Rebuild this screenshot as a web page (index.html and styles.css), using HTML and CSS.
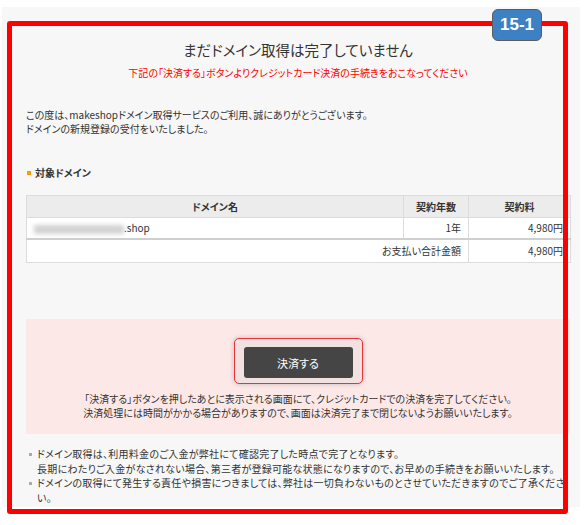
FILE: index.html
```html
<!DOCTYPE html>
<html lang="ja">
<head>
<meta charset="utf-8">
<title>ドメイン取得</title>
<link rel="stylesheet" href="styles.css">
</head>
<body>
<div class="panel">
  <h1 class="title">まだドメイン取得は完了していません</h1>
  <p class="alert">下記の「決済する」ボタンよりクレジットカード決済の手続きをおこなってください</p>
  <p class="intro">この度は、makeshopドメイン取得サービスのご利用、誠にありがとうございます。<br>ドメインの新規登録の受付をいたしました。</p>
  <h2 class="sec">対象ドメイン</h2>
  <table class="domains">
    <thead>
      <tr><th class="c-name">ドメイン名</th><th class="c-year">契約年数</th><th class="c-fee">契約料</th></tr>
    </thead>
    <tbody>
      <tr class="item"><td class="name"><span class="blur"></span>.shop</td><td class="num">1年</td><td class="num">4,980円</td></tr>
      <tr class="total"><td class="num" colspan="2">お支払い合計金額</td><td class="num">4,980円</td></tr>
    </tbody>
  </table>
  <div class="pay">
    <div class="btn-wrap"><button class="btn" type="button">決済する</button></div>
    <p class="pay-note">「決済する」ボタンを押したあとに表示される画面にて、クレジットカードでの決済を完了してください。<br>決済処理には時間がかかる場合がありますので、画面は決済完了まで閉じないようお願いいたします。</p>
  </div>
  <ul class="notes">
    <li>ドメイン取得は、利用料金のご入金が弊社にて確認完了した時点で完了となります。<br>長期にわたりご入金がなされない場合、第三者が登録可能な状態になりますので、お早めの手続きをお願いいたします。</li>
    <li>ドメインの取得にて発生する責任や損害につきましては、弊社は一切負わないものとさせていただきますのでご了承くださ<br>い。</li>
  </ul>
</div>
<div class="frame"></div>
<div class="badge">15-1</div>
</body>
</html>
```
FILE: styles.css
```css
* { box-sizing: border-box; }
html, body { margin: 0; padding: 0; background: #fff; }
body {
  position: relative;
  width: 584px;
  height: 525px;
  overflow: hidden;
  font-family: "Noto Sans CJK JP", "Noto Sans", sans-serif;
  font-feature-settings: "palt";
  color: #333;
}
.panel {
  margin: 7px 0 0 2px;
  width: 578px;
  height: 500px;
  background: #f7f7f7;
  padding: 33px 10px 0 24px;
}
.title {
  margin: 0;
  font-size: 14.5px;
  line-height: 20px;
  font-weight: normal;
  text-align: center;
  color: #333;
}
.alert {
  margin: 6px 0 0;
  font-size: 10px;
  line-height: 14px;
  color: #f00;
  text-align: center;
}
.intro {
  margin: 28px 0 0;
  font-size: 10px;
  line-height: 14px;
}
.sec {
  margin: 30px 0 0;
  font-size: 10px;
  line-height: 14px;
  font-weight: bold;
  display: flex;
  align-items: center;
  gap: 4px;
  padding-left: 1px;
}
.sec::before {
  content: "";
  width: 4px;
  height: 4px;
  background: #f90;
}
.domains {
  margin-top: 15px;
  width: 544px;
  border-collapse: collapse;
  font-size: 10px;
  table-layout: fixed;
}
.domains th, .domains td {
  border: 1px solid #dcdcdc;
  padding: 0 7px;
}
.domains th {
  background: #ececec;
  height: 22px;
  font-weight: bold;
  text-align: center;
}
.c-name { width: 377px; }
.c-year { width: 65px; }
.c-fee { width: 102px; }
.domains td { background: #fff; }
.item td { height: 21px; border-bottom: 2px solid #cfcfcf; }
.total td { height: 24px; }
.num { text-align: right; }
.name { padding-left: 4px; }
.blur {
  display: inline-block;
  width: 90px;
  height: 9px;
  background: #d2d2d2;
  filter: blur(2px);
  vertical-align: middle;
}
.pay {
  margin-top: 56px;
  background: #fde8e8;
  padding: 19px 0 14px;
  text-align: center;
}
.btn-wrap {
  display: inline-block;
  padding: 8px 9px 5px;
  border: 1.5px solid #e8333a;
  border-radius: 5px;
  background: #f1e1e1;
  box-shadow: 0 0 5px rgba(0,0,0,0.22);
}
.btn {
  display: block;
  width: 109px;
  height: 31px;
  border: 0;
  border-radius: 3px;
  background: #454545;
  color: #fff;
  font-family: inherit;
  font-feature-settings: "palt";
  font-size: 11px;
}
.pay-note {
  margin: 8px 0 0;
  font-size: 10px;
  line-height: 14px;
}
.notes {
  list-style: none;
  margin: 13px 0 0;
  padding: 0 0 0 11px;
  font-size: 10px;
  line-height: 14.5px;
  letter-spacing: 0.25px;
  white-space: nowrap;
}
.notes li { position: relative; }
.notes li::before {
  content: "";
  position: absolute;
  left: -8px;
  top: 6px;
  width: 3px;
  height: 3px;
  background: #aaa;
}
.frame {
  position: absolute;
  left: 7px;
  top: 21px;
  width: 561px;
  height: 493px;
  border: 5px solid #f00;
  border-radius: 3px;
  pointer-events: none;
}
.badge {
  position: absolute;
  left: 492px;
  top: 9px;
  width: 50px;
  height: 32px;
  background: #3d80c4;
  border: 1.5px solid #5c5c5c;
  border-radius: 6px;
  color: #fff;
  font-family: "Liberation Sans", Arial, sans-serif;
  font-weight: bold;
  font-size: 17px;
  display: flex;
  align-items: center;
  justify-content: center;
}
```
